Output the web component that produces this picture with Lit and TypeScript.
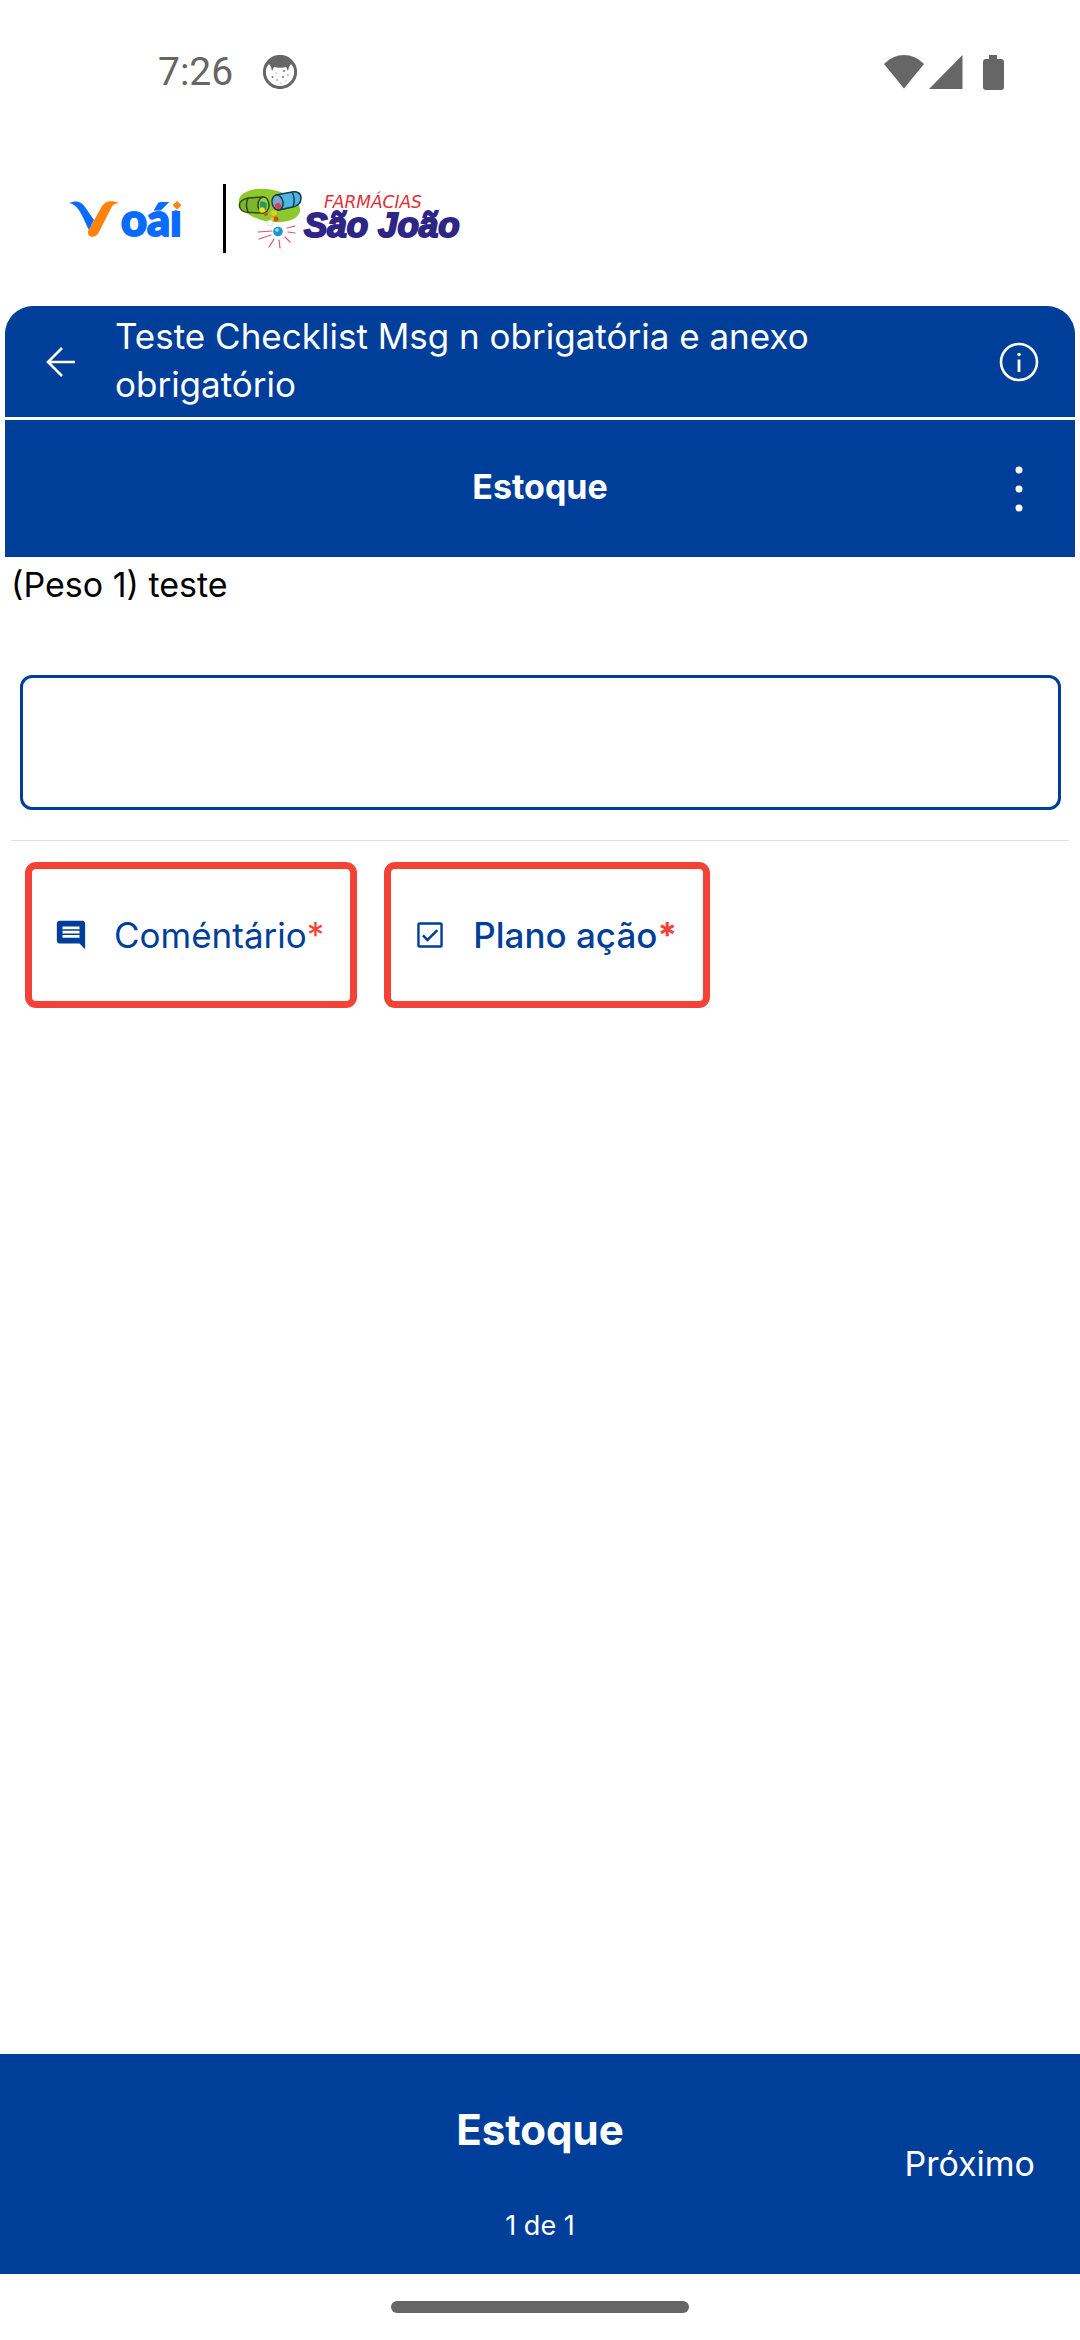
import { LitElement, html, css, svg } from "lit";
import { customElement } from "lit/decorators.js";

const statusFace = html`<svg class="face" viewBox="0 0 34 34" aria-hidden="true">
  <circle cx="17" cy="17" r="15.6" fill="none" stroke="#666" stroke-width="3"></circle>
  <path d="M3 13C5 6 10 2 17 2s12 4 14 11l-3-4-2 3-1 4-2-4c-3 1-9 1-12 0l-2 4-1-4-2-3z" fill="#666"></path>
  <g fill="#777">
    <circle cx="9.500" cy="22" r="1"></circle><circle cx="21" cy="16" r="1"></circle>
    <circle cx="13" cy="18" r=".6"></circle><circle cx="20" cy="22" r="1"></circle>
    <circle cx="14" cy="25" r=".8"></circle><circle cx="25" cy="20" r=".7"></circle>
    <circle cx="18" cy="28" r=".6"></circle><circle cx="23" cy="26" r=".6"></circle>
  </g>
</svg>`;

const statusSignals = html`<svg class="signals" viewBox="0 0 120 35" aria-hidden="true" fill="#666">
  <path d="M0 9C12-3 28-3 40 9L20 33.500z"></path>
  <path d="M78.500 0V34H45z"></path>
  <path d="M105 0h8v4h4q3 0 3 3v25q0 3-3 3h-15q-3 0-3-3V7q0-3 3-3h3z"></path>
</svg>`;

const voai = html`<svg class="voai" viewBox="0 0 114 40" role="img" aria-label="Voái">
  <path d="M0 4C6 1.500 12 1.500 16 8L25 21 20 31C15 22 11 6 0 4z" fill="#0a6cff"></path>
  <path d="M50 4C43 1 36 1.500 32.500 8L19.300 31.500C17 39 27 40 30 33L42.700 8C44 5.500 46 4.500 50 4z" fill="#ff830a"></path>
  <text class="voai-text" x="52" y="37">oái</text>
  <path d="M101 0h16v11h-16z" fill="#fff"></path>
  <path d="M108 2.500l4 3.800-4 3.800-4-3.800z" fill="#ff830a" stroke="#ff830a" stroke-linejoin="round"></path>
</svg>`;

const rays = [
  [258, 232, 272, 231], [259, 239, 271, 235], [269, 247, 274, 239], [280, 248, 279, 240],
  [290, 242, 285, 237], [295, 233, 288, 232], [295, 226, 287, 228],
];

const saoJoao = html`<svg class="sao-joao" viewBox="238 184 224 69" role="img" aria-label="Farmácias São João">
  <ellipse cx="269.500" cy="205.500" rx="31" ry="16" transform="rotate(11 269.500 205.500)" fill="#8dc92c"></ellipse>
  <g stroke="#2c4a12" stroke-width="1.500">
    <path d="M263 197l-15 1c-5 1-9 4-8.500 8 .5 5 6 6.500 10 6.500l14 .5z" fill="#7fb52c"></path>
    <ellipse cx="263.500" cy="205" rx="5.500" ry="8" fill="#a5c94e"></ellipse>
    <path d="M248 198q-3 7 0 14" fill="none"></path>
  </g>
  <g stroke="#153a52" stroke-width="1.500">
    <path d="M276 195l16-3c5-1 9 1 9 6s-3 8-8 9l-15 3z" fill="#4fb4e0"></path>
    <ellipse cx="277.500" cy="202.500" rx="5.500" ry="7.500" transform="rotate(-10 277.500 202.500)" fill="#7ba6cf"></ellipse>
    <path d="M292 192q4 7 1 15" fill="none"></path>
  </g>
  <path d="M260 202c3-1 6 0 7 2l-1 6-6-1z" fill="#1ca05a"></path>
  <circle cx="262" cy="210" r="2.800" fill="#f5e21b"></circle>
  <circle cx="266" cy="214" r="2" fill="#d9501f"></circle>
  <circle cx="278" cy="206" r="3" fill="#d8434b"></circle>
  <circle cx="274" cy="213" r="2.800" fill="#f3c81c"></circle>
  <circle cx="276" cy="219" r="2.500" fill="#d24a22"></circle>
  <circle cx="272" cy="219" r="1.800" fill="#f3c81c"></circle>
  <circle cx="270" cy="223" r="3" fill="#fff" stroke="#ccd6c8" stroke-width=".7"></circle>
  <g stroke="#d4577c" stroke-width="1.200" stroke-linecap="round">
    ${rays.map(([a, b, c, d]) => svg`<line x1=${a} y1=${b} x2=${c} y2=${d}></line>`)}
  </g>
  <circle cx="278" cy="231.500" r="4.800" fill="#1b97d3"></circle>
  <circle cx="277" cy="230" r="1.800" fill="#a8e0f5"></circle>
  <text class="farmacias" x="324" y="208">FARMÁCIAS</text>
  <text class="sao-joao-text" x="304" y="237">São João</text>
</svg>`;

const arrowIcon = html`<svg class="icon" viewBox="0 0 34 34" aria-hidden="true" fill="none" stroke="#fff" stroke-width="2.600">
  <path d="M31 17H4M18 3L4 17l14 14"></path>
</svg>`;

const infoIcon = html`<svg class="icon-large" viewBox="0 0 40 40" aria-hidden="true">
  <circle cx="20" cy="20" r="18" fill="none" stroke="#fff" stroke-width="2.600"></circle>
  <circle cx="20" cy="12.500" r="1.800" fill="#fff"></circle>
  <path d="M20 17.500V30" stroke="#fff" stroke-width="2.800"></path>
</svg>`;

const moreIcon = html`<svg class="icon-tall" viewBox="0 0 10 46" aria-hidden="true" fill="#fff">
  <circle cx="5" cy="4" r="3.500"></circle><circle cx="5" cy="23" r="3.500"></circle><circle cx="5" cy="42" r="3.500"></circle>
</svg>`;

const commentIcon = html`<svg class="icon" viewBox="0 0 24 24" aria-hidden="true" fill="#003f99">
  <path d="M21.990 4c0-1.100-.890-2-1.990-2H4c-1.100 0-2 .9-2 2v12c0 1.100.9 2 2 2h14l4 4-.010-18zM18 14H6v-2h12v2zm0-3H6V9h12v2zm0-3H6V6h12v2z"></path>
</svg>`;

const checkIcon = html`<svg class="icon" viewBox="0 0 24 24" aria-hidden="true" fill="none" stroke="#003f99" stroke-width="1.700">
  <rect x="3.850" y="3.850" width="16.300" height="16.300" rx=".8"></rect>
  <path d="M7 12.300l3.200 3.200L17.200 8.500"></path>
</svg>`;

@customElement("app-root")
export class AppRoot extends LitElement {
  static styles = css`
    :host {
      display: flex;
      flex-direction: column;
      min-height: 100vh;
      background: #fff;
      color: #000;
      font-family: Inter, "Noto Sans", sans-serif;
      font-size: 34px;
      line-height: 48px;
    }
    * { box-sizing: border-box; }
    svg { display: block; flex: none; }
    button {
      margin: 0;
      padding: 0;
      border: 0;
      background: none;
      color: inherit;
      font: inherit;
      cursor: pointer;
    }
    .status {
      display: flex;
      align-items: center;
      gap: 30px;
      padding: 48px 76px 48px 158px;
      color: #666;
    }
    .time { font-family: Roboto, sans-serif; font-size: 39px; }
    .face { width: 34px; height: 34px; }
    .signals { width: 120px; height: 35px; margin-left: auto; }
    .brand {
      display: flex;
      align-items: center;
      padding: 40px 69px 53px;
    }
    .voai { width: 114px; height: 40px; overflow: visible; }
    .voai-text {
      font: 900 45px Lato, sans-serif;
      fill: #0a6cff;
      stroke: #0a6cff;
      stroke-width: 2px;
    }
    .brand-rule { width: 3px; height: 69px; margin: 0 12px 0 40px; background: #000; }
    .sao-joao { width: 224px; height: 69px; overflow: visible; }
    .farmacias { font: oblique 17px "DejaVu Sans", sans-serif; fill: #e0303c; }
    .sao-joao-text {
      font: italic 700 35px "Liberation Sans", sans-serif;
      fill: #2e2585;
      stroke: #2e2585;
      stroke-width: 2px;
    }
    .heading {
      display: flex;
      flex-direction: column;
      gap: 3px;
      margin: 0 5px;
      color: #fff;
    }
    .bar {
      display: grid;
      grid-template-columns: 56px 1fr 56px;
      align-items: center;
      background: #003f99;
      padding: 0 28px;
    }
    .title-bar { min-height: 111px; border-radius: 28px 28px 0 0; }
    .section-bar { min-height: 137px; }
    .title, .section { margin: 0; padding-bottom: 4px; }
    .title { padding-left: 26px; padding-right: 180px; font-size: 35px; font-weight: 400; }
    .section { grid-column: 2; text-align: center; font-size: 34px; font-weight: 700; }
    .icon-button {
      display: flex;
      align-items: center;
      justify-content: center;
      height: 56px;
    }
    .icon { width: 34px; height: 34px; }
    .icon-large { width: 40px; height: 40px; }
    .icon-tall { width: 10px; height: 46px; }
    .question { display: flex; flex-direction: column; padding: 4px 11px 0; }
    .answer {
      height: 135px;
      margin: 66px 8px 30px 9px;
      padding: 0 24px;
      border: 3px solid #003f99;
      border-radius: 12px;
      background: #fff;
      font: inherit;
      outline: none;
    }
    .actions {
      display: flex;
      gap: 27px;
      padding: 21px 14px;
      border-top: 1px solid #e0e0e0;
    }
    .action {
      display: flex;
      align-items: center;
      gap: 26px;
      padding: 42px 26px 42px 22px;
      border: 7px solid #f44336;
      border-radius: 11px;
      color: #003f99;
      font-size: 35px;
      white-space: nowrap;
    }
    .strong { font-weight: 500; }
    .required { color: #f44336; }
    .strong .required { font-weight: 700; }
    .footer {
      display: grid;
      grid-template-columns: 1fr auto 1fr;
      align-items: center;
      margin-top: auto;
      padding: 28px 45px;
      background: #003f99;
      color: #fff;
    }
    .progress {
      display: flex;
      flex-direction: column;
      gap: 46px;
      grid-column: 2;
      padding-top: 18px;
      text-align: center;
    }
    .footer-title { margin: 0; font-size: 42px; line-height: 60px; font-weight: 700; }
    .page { margin: 0; font-size: 27px; line-height: 40px; }
    .next { justify-self: end; }
    .gesture { display: flex; justify-content: center; padding: 27px 0; }
    .handle { width: 298px; height: 12px; border-radius: 6px; background: #666; }
  `;

  render() {
    return html`
      <div class="status"><span class="time">7:26</span>${statusFace}${statusSignals}</div>
      <header class="brand">${voai}<span class="brand-rule"></span>${saoJoao}</header>
      <div class="heading">
        <div class="bar title-bar">
          <button class="icon-button" aria-label="Voltar">${arrowIcon}</button>
          <h1 class="title">Teste Checklist Msg n obrigatória e anexo obrigatório</h1>
          <button class="icon-button" aria-label="Informações">${infoIcon}</button>
        </div>
        <div class="bar section-bar">
          <h2 class="section">Estoque</h2>
          <button class="icon-button" aria-label="Mais opções">${moreIcon}</button>
        </div>
      </div>
      <main class="question">
        <label for="answer">(Peso 1) teste</label>
        <input class="answer" id="answer" type="text" />
        <div class="actions">
          <button class="action">${commentIcon}<span>Coméntário<span class="required">*</span></span></button>
          <button class="action strong">${checkIcon}<span>Plano ação<span class="required">*</span></span></button>
        </div>
      </main>
      <footer class="footer">
        <div class="progress">
          <h2 class="footer-title">Estoque</h2>
          <p class="page">1 de 1</p>
        </div>
        <button class="next">Próximo</button>
      </footer>
      <div class="gesture"><span class="handle"></span></div>
    `;
  }
}
